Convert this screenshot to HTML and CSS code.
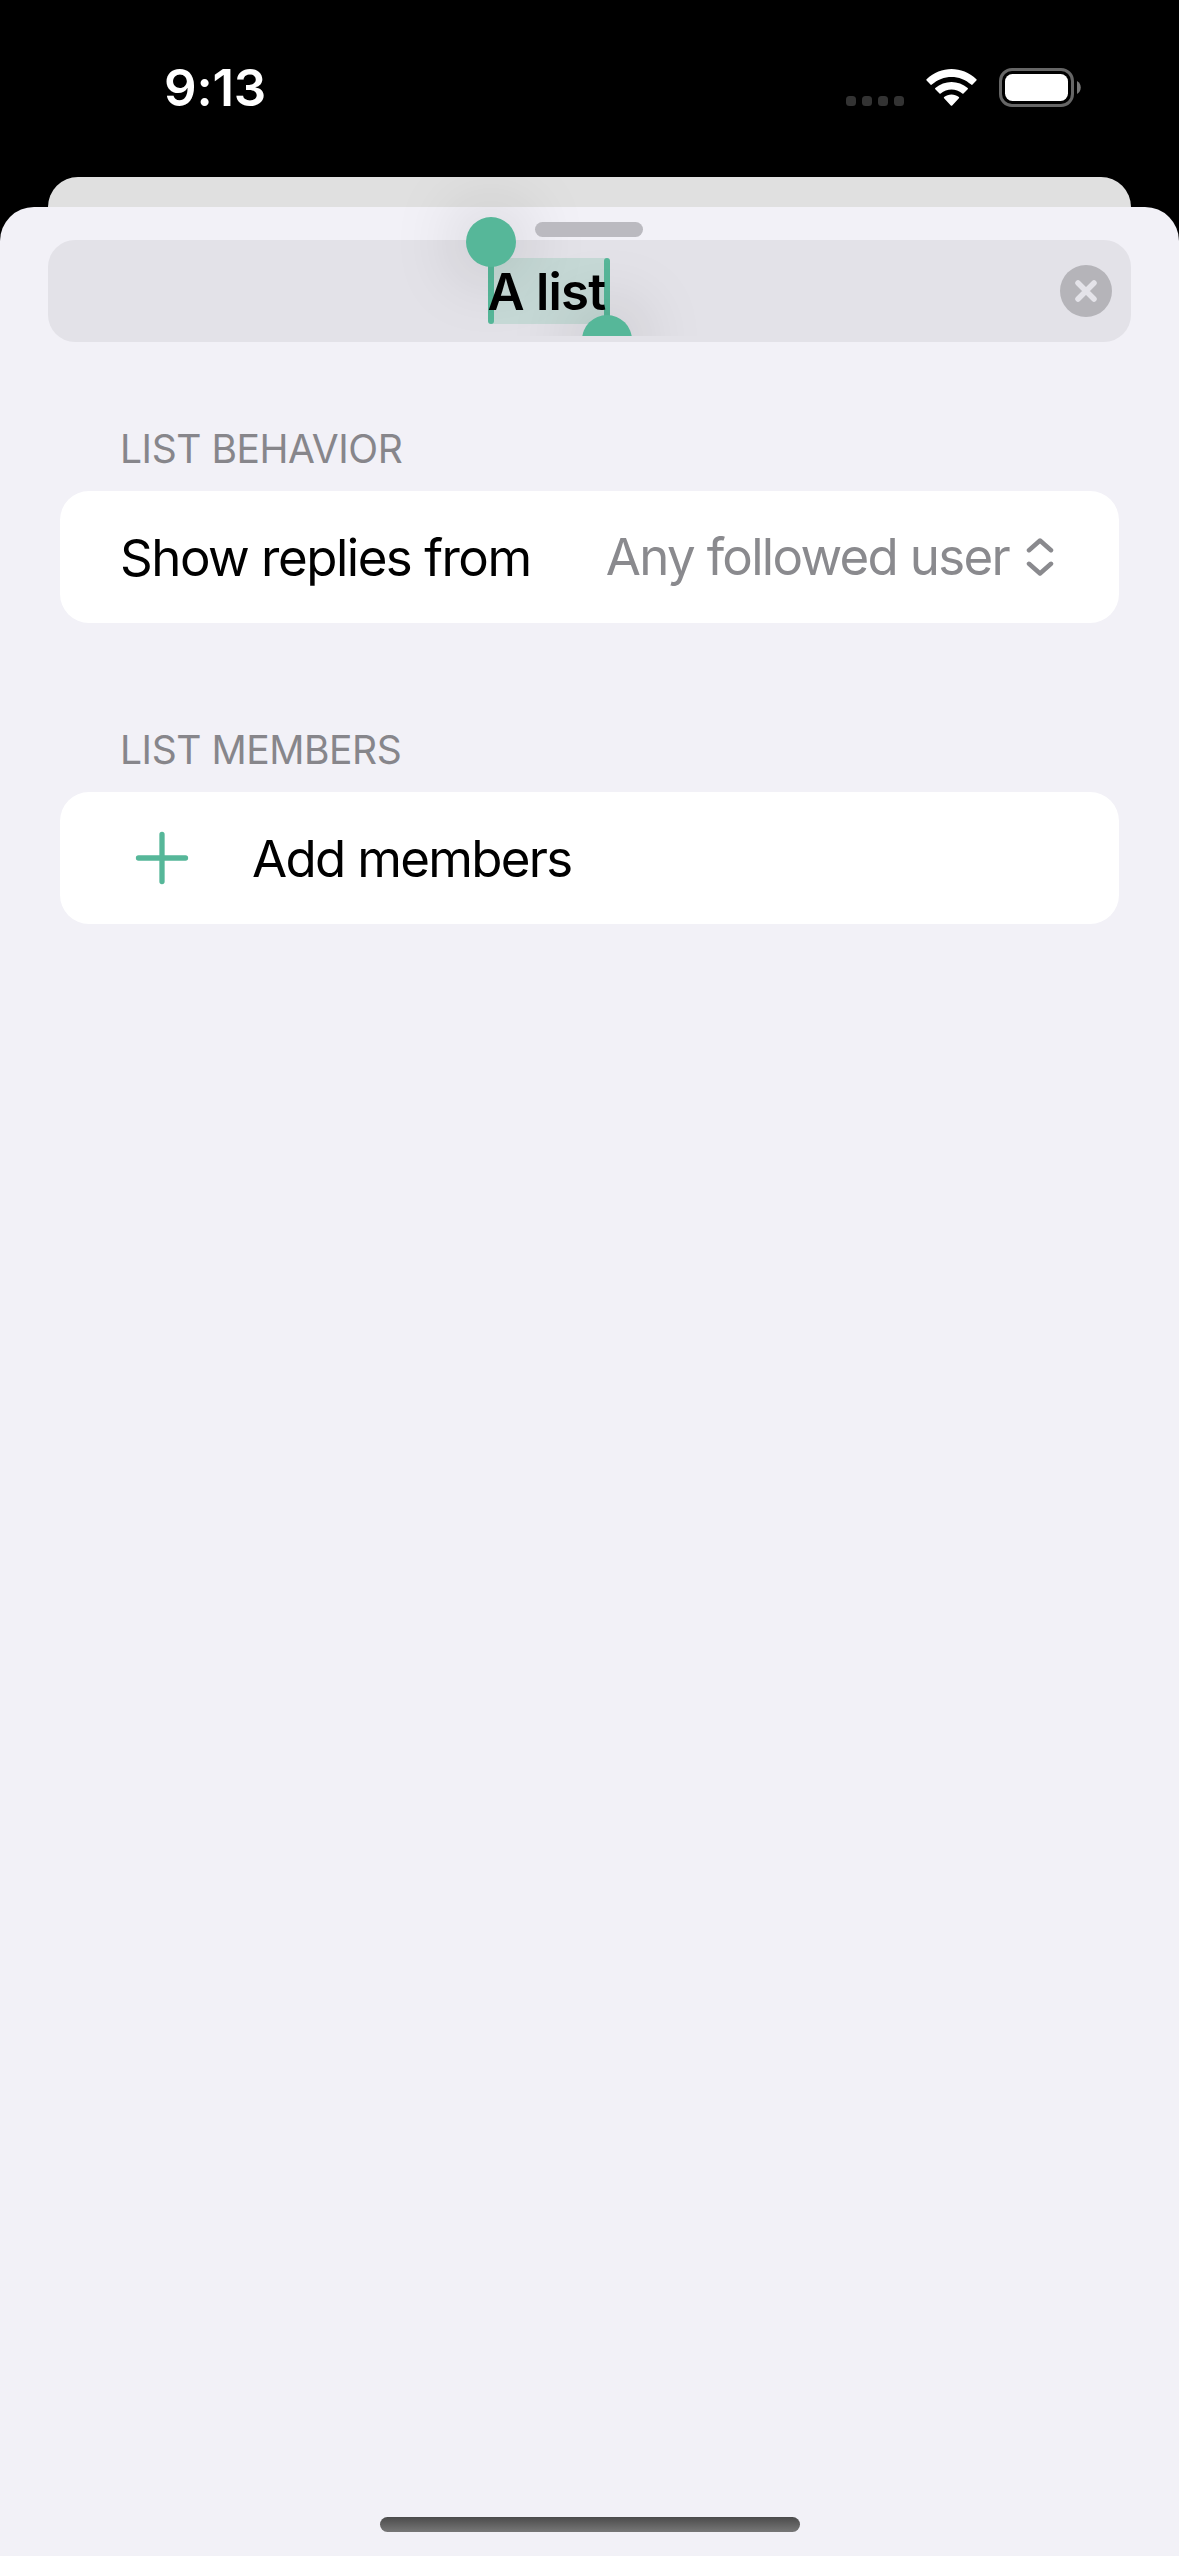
FILE: index.html
```html
<!DOCTYPE html>
<html lang="en">
<head>
<meta charset="utf-8">
<title>Edit list</title>
<link rel="stylesheet" href="styles.css">
</head>
<body>
<div class="screen">
  <header class="status">
    <span class="time">9:13</span>
    <div class="indicators">
      <svg class="cell" width="58" height="10" viewBox="0 0 58 10" fill="#333"><rect width="10" height="10" rx="3.5"/><rect x="16" width="10" height="10" rx="3.5"/><rect x="32" width="10" height="10" rx="3.5"/><rect x="48" width="10" height="10" rx="3.5"/></svg>
      <svg class="wifi" width="51" height="38" viewBox="0 0 51 38" fill="#fff"><path d="M.6 10.2Q0 10.8.6 11.5L4.7 15.7Q5.2 16.100 5.800 15.600C17 5.300 34 5.300 45.200 15.600Q45.800 16.100 46.300 15.700L50.400 11.500Q51 10.800 50.400 10.200C36 -3.400 15 -3.400 .6 10.200Z"/><path d="M9.300 19.100Q8.700 19.700 9.300 20.300L13.500 24.500Q14 25 14.700 24.500C21 19.100 30 19.100 36.300 24.500Q37 25 37.500 24.500L41.700 20.300Q42.300 19.700 41.700 19.100C32.500 10.900 18.500 10.900 9.300 19.100Z"/><path d="M18.100 28Q17.500 28.600 18.100 29.200L24.800 36.400Q25.500 37.100 26.200 36.400L32.900 29.200Q33.500 28.600 32.900 28C28.700 24.500 22.300 24.500 18.100 28Z"/></svg>
      <svg class="battery" width="82" height="39" viewBox="0 0 82 39"><rect x="1.500" y="1.500" width="72" height="36" rx="11.500" fill="none" stroke="#666" stroke-width="3"/><rect x="6" y="6" width="63" height="27" rx="7.500" fill="#fff"/><path d="M78 13C83 15.500 83 23.500 78 26Z" fill="#777"/></svg>
    </div>
  </header>
  <div class="back-sheet"></div>
  <main class="sheet">
    <div class="field">
      <div class="selection-clip">
        <span class="stem stem-start"></span><span class="stem stem-end"></span>
        <span class="knob knob-start"></span><span class="knob knob-end"></span>
      </div>
      <span class="name">A list</span>
      <svg class="clear" width="52" height="52" viewBox="0 0 52 52"><circle cx="26" cy="26" r="26" fill="#b5b4b9"/><path d="M18 18L34 34M34 18L18 34" stroke="#e4e3e9" stroke-width="5.500" stroke-linecap="round"/></svg>
    </div>
    <div class="grabber"></div>
    <section class="group">
      <h2 class="heading">LIST BEHAVIOR</h2>
      <div class="row">
        <span class="label replies">Show replies from</span>
        <span class="value">Any followed user</span>
        <svg class="chevrons" width="28" height="40" viewBox="0 0 28 40" fill="none" stroke="#8a8a8e" stroke-width="4.500" stroke-linecap="round" stroke-linejoin="round"><path d="M3 13.200L14 3.500L25 13.200M3 26.800L14 36.500L25 26.800"/></svg>
      </div>
    </section>
    <section class="group">
      <h2 class="heading">LIST MEMBERS</h2>
      <div class="row">
        <svg class="plus" width="54" height="54" viewBox="0 0 54 54" stroke="#56b799" stroke-width="5.300" stroke-linecap="round"><path d="M27 3.500V50.500M3.500 27H50.500"/></svg>
        <span class="label add">Add members</span>
      </div>
    </section>
    <div class="home"></div>
  </main>
</div>
</body>
</html>
```
FILE: styles.css
```css
* { box-sizing: border-box; }
body { margin: 0; background: #000; font-family: Inter, sans-serif; }
.screen { width: 1179px; height: 2556px; display: flex; flex-direction: column; background: #000; overflow: hidden; }
.status { height: 177px; display: flex; justify-content: space-between; padding: 57px 98px 0 164px; color: #fff; }
.time { font-size: 51px; line-height: 62px; font-weight: 600; letter-spacing: -.2px; }
.indicators { display: flex; height: 62px; }
.cell { margin-top: 39px; }
.wifi { margin: 12px 0 0 22px; }
.battery { margin: 11px 0 0 22px; }
.back-sheet { height: 30px; margin: 0 48px; border-radius: 30px 30px 0 0; background: #e0e0e0; }
.sheet { position: relative; flex: 1; display: flex; flex-direction: column; padding: 33px 48px 24px; border-radius: 34px 34px 0 0; background: #f2f1f7; }
.field { position: relative; height: 102px; display: flex; align-items: center; justify-content: center; padding-right: 86px; border-radius: 27px; background: #e3e2e8; }
.name { position: relative; margin-top: 2px; font-size: 51px; line-height: 62px; font-weight: 600; letter-spacing: -.8px; }
.clear { position: absolute; right: 19px; top: 25px; }
.selection-clip { position: absolute; left: 443px; top: 18px; width: 116px; height: 78px; clip-path: inset(-120px -150px 0); background: linear-gradient(#c6d9d6 66px, transparent 66px); }
.stem { position: absolute; top: 0; width: 6px; height: 66px; border-radius: 3px; background: #56b799; }
.stem-start { left: -3px; }
.stem-end { left: 113px; }
.knob { position: absolute; width: 50px; height: 50px; border-radius: 50%; background: #56b799; box-shadow: 0 0 72px rgba(0, 0, 0, .28); }
.knob-start { left: -25px; top: -41px; }
.knob-end { left: 91px; top: 57px; }
.grabber { position: absolute; left: 535px; top: 15px; width: 108px; height: 15px; border-radius: 8px; background: #bbbac0; }
.group { margin: 0 12px; }
.heading { margin: 83px 0 19px 60px; font-size: 39px; line-height: 47px; font-weight: 400; letter-spacing: -.45px; color: #87868b; }
.group + .group .heading { margin-top: 103px; }
.row { height: 132px; display: flex; align-items: center; padding: 0 65px 0 60px; border-radius: 29px; background: #fff; }
.label, .value { font-size: 51px; line-height: 62px; white-space: nowrap; }
.label { margin-top: 2px; }
.value { margin-left: auto; color: #8a8a8e; letter-spacing: -1.7px; }
.chevrons { margin-left: 17px; }
.plus { margin-left: 15px; }
.add { margin-left: 63px; letter-spacing: -1.7px; }
.home { width: 420px; height: 15px; margin: auto auto 0; border-radius: 8px; background: linear-gradient(#4b4b4b, #777); }
.replies { letter-spacing: -1.5px; }
```
